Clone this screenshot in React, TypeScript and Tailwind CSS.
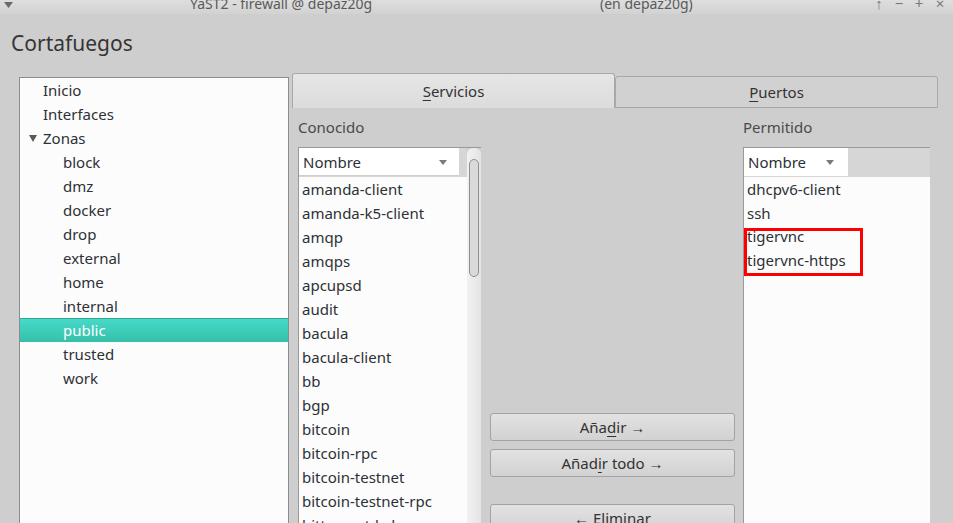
import React from "react";

// Árbol de navegación del cortafuegos
const tree: { label: string; level: number; expanded?: boolean }[] = [
  { label: "Inicio", level: 0 },
  { label: "Interfaces", level: 0 },
  { label: "Zonas", level: 0, expanded: true },
  { label: "block", level: 1 },
  { label: "dmz", level: 1 },
  { label: "docker", level: 1 },
  { label: "drop", level: 1 },
  { label: "external", level: 1 },
  { label: "home", level: 1 },
  { label: "internal", level: 1 },
  { label: "public", level: 1 },
  { label: "trusted", level: 1 },
  { label: "work", level: 1 },
];

const known = [
  "amanda-client",
  "amanda-k5-client",
  "amqp",
  "amqps",
  "apcupsd",
  "audit",
  "bacula",
  "bacula-client",
  "bb",
  "bgp",
  "bitcoin",
  "bitcoin-rpc",
  "bitcoin-testnet",
  "bitcoin-testnet-rpc",
  "bittorrent-lsd",
];

const allowed = ["dhcpv6-client", "ssh", "tigervnc", "tigervnc-https"];

function SortArrow() {
  return (
    <svg width="8" height="5" viewBox="0 0 8 5" className="shrink-0">
      <path d="M0 0 L8 0 L4 5 Z" fill="#7a7a7a" />
    </svg>
  );
}

function Button({ children }: { children: React.ReactNode }) {
  return (
    <div className="h-[28px] w-full rounded-[3px] border border-[#a3a3a3] bg-gradient-to-b from-[#e2e2e2] to-[#d2d2d2] flex items-center justify-center text-[15px] text-[#333]">
      {children}
    </div>
  );
}

export default function App() {
  const selected = "public";

  return (
    <div
      className="w-[953px] h-[523px] overflow-hidden bg-[#cecece] text-[#2d3136]"
      style={{ fontFamily: '"Noto Sans", "Open Sans", sans-serif' }}
    >
      {/* Barra de título (cortada) */}
      <div className="h-[14px] overflow-hidden bg-gradient-to-b from-[#dedede] to-[#d2d2d2] relative">
        <div className="flex items-end h-[14px] text-[14px] leading-none text-[#5a5a5a]">
          <svg width="9" height="6" viewBox="0 0 9 6" className="ml-[4px] mb-[6px]">
            <path d="M0 0 L9 0 L4.5 6 Z" fill="#6a6a6a" />
          </svg>
          <span className="ml-[177px] mb-[3px]">YaST2 - firewall @ depaz20g</span>
          <span className="ml-[228px] mb-[3px]">(en depaz20g)</span>
          <div className="ml-auto mr-[2px] mb-[3px] flex text-[#7a7a7a] text-[15px]">
            <span className="w-[20px] text-center">↑</span>
            <span className="w-[20px] text-center">−</span>
            <span className="w-[20px] text-center">+</span>
            <span className="w-[22px] text-center">×</span>
          </div>
        </div>
      </div>

      <h1 className="pl-[11px] pt-[16px] h-[59px] text-[21px] leading-[26px] text-[#353535]">Cortafuegos</h1>

      <div className="flex">
        {/* Panel izquierdo: árbol */}
        <div className="ml-[19px] mt-[4px] w-[270px] h-[460px] border border-[#8c8c8c] border-b-0 bg-[#fcfcfc]">
          {tree.map((item) => {
            const isSel = item.label === selected;
            return (
              <div
                key={item.label}
                className={`h-[24px] flex items-center text-[15px] ${
                  isSel
                    ? "bg-gradient-to-b from-[#46dac8] to-[#36c0aa] border-t border-[#2fa894] text-white"
                    : ""
                }`}
              >
                {item.level === 0 ? (
                  <div className="w-[23px] flex justify-end pr-[6px]">
                    {item.expanded && (
                      <svg width="8" height="7" viewBox="0 0 8 7">
                        <path d="M0 0 L8 0 L4 7 Z" fill="#5a5a5a" />
                      </svg>
                    )}
                  </div>
                ) : (
                  <div className="w-[43px]" />
                )}
                <span>{item.label}</span>
              </div>
            );
          })}
        </div>

        {/* Pestañas */}
        <div className="ml-[3px] w-[646px]">
          <div className="flex h-[35px] items-end">
            <div className="w-[323px] h-[35px] border border-[#a8a8a8] border-b-0 rounded-t-[3px] bg-gradient-to-b from-[#e6e6e6] to-[#dcdcdc] flex items-center justify-center text-[15px] text-[#333]">
              <span>
                <span className="underline underline-offset-[3px]">S</span>ervicios
              </span>
            </div>
            <div className="w-[323px] h-[32px] border border-[#a8a8a8] rounded-t-[3px] bg-[#d1d1d1] flex items-center justify-center text-[15px] text-[#333]">
              <span>
                <span className="underline underline-offset-[3px]">P</span>uertos
              </span>
            </div>
          </div>

          <div className="flex pl-[6px]">
            {/* Conocido */}
            <div className="w-[183px]">
              <div className="h-[39px] flex items-center text-[15px] text-[#4a4a4a] pb-[1px]">Conocido</div>
              <div className="flex h-[380px] border-l border-t border-[#9a9a9a]">
                <div className="flex-1 bg-[#fcfcfc]">
                  <div className="h-[29px] flex bg-white border-b border-[#d6d6d6]">
                    <div className="w-[160px] flex items-center pl-[4px] pr-[12px] text-[15px] shadow-[inset_0_-1px_0_#cfcfcf]">
                      <span className="flex-1">Nombre</span>
                      <SortArrow />
                    </div>
                    <div className="flex-1 bg-[#d6d6d6]" />
                  </div>
                  {known.map((s) => (
                    <div key={s} className="h-[24px] flex items-center pl-[3px] text-[15px]">
                      {s}
                    </div>
                  ))}
                </div>
                <div className="w-[14px] rounded-t-[6px] bg-gradient-to-r from-[#f2f2f2] to-[#e4e4e4] pt-[11px] flex justify-center">
                  <div className="w-[10px] h-[118px] rounded-full border border-[#8e8e8e] bg-[#dadada]" />
                </div>
              </div>
            </div>

            {/* Botones */}
            <div className="ml-[9px] w-[245px] pt-[305px] flex flex-col gap-[8px]">
              <Button>
                Aña<span className="underline underline-offset-[3px]">d</span>ir →
              </Button>
              <Button>
                Añad<span className="underline underline-offset-[3px]">i</span>r todo →
              </Button>
              <div className="mt-[19px]">
                <Button>← Eliminar</Button>
              </div>
            </div>

            {/* Permitido */}
            <div className="ml-[8px] w-[187px]">
              <div className="h-[39px] flex items-center text-[15px] text-[#4a4a4a] pb-[1px]">Permitido</div>
              <div className="h-[380px] border-l border-t border-[#9a9a9a] bg-[#fcfcfc]">
                <div className="h-[29px] flex bg-[#d6d6d6]">
                  <div className="w-[104px] flex items-center pl-[4px] pr-[14px] bg-white text-[15px] border-b border-[#d6d6d6]">
                    <span className="flex-1">Nombre</span>
                    <SortArrow />
                  </div>
                </div>
                <div>
                  {allowed.slice(0, 2).map((s) => (
                    <div key={s} className="h-[24px] flex items-center pl-[3px] text-[15px]">
                      {s}
                    </div>
                  ))}
                  <div className="mt-[3px] w-[119px] h-[48px] border-[3px] border-[#ff0000]">
                    <div className="-mt-[7px]">
                      {allowed.slice(2).map((s) => (
                        <div key={s} className="h-[24px] flex items-center text-[15px]">
                          {s}
                        </div>
                      ))}
                    </div>
                  </div>
                </div>
              </div>
            </div>
          </div>
        </div>
      </div>
    </div>
  );
}
